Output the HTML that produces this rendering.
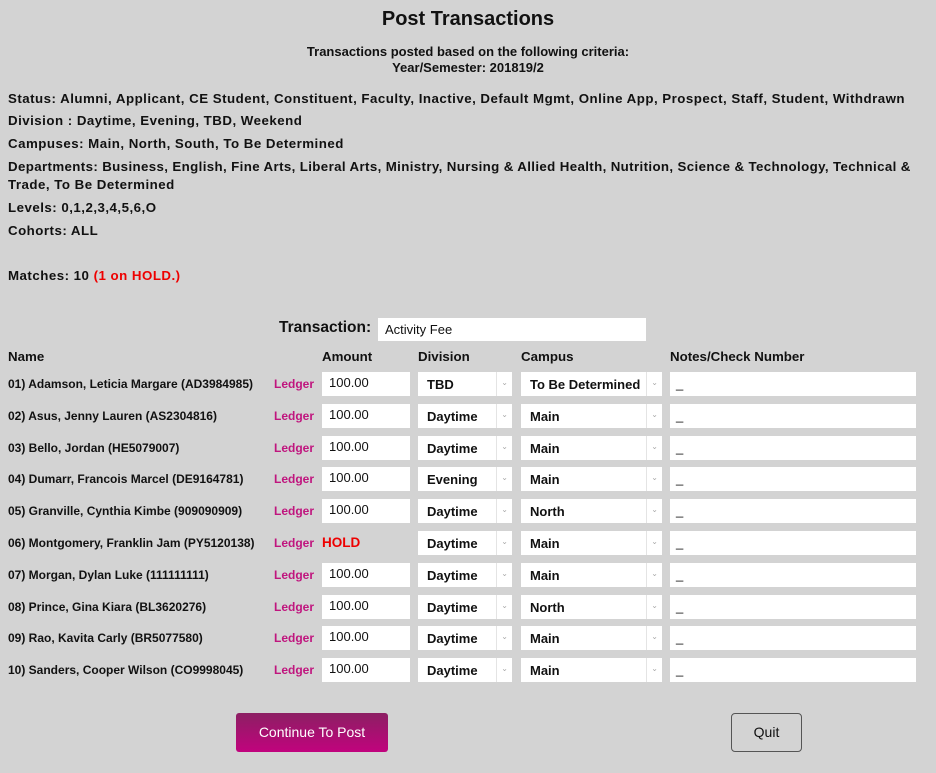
<!DOCTYPE html>
<html><head><meta charset="utf-8"><style>
body{margin:0;width:936px;height:773px;background:#d3d3d3;font-family:"Liberation Sans",sans-serif;color:#111;position:relative;overflow:hidden}
.a{position:absolute;white-space:nowrap}
.b{font-weight:bold}
h1{position:absolute;top:8px;left:0;width:936px;text-align:center;font-size:20px;margin:0;font-weight:bold}
.c{left:0;width:936px;text-align:center;font-size:13px;font-weight:bold}
.l{left:8px;font-size:13.3px;font-weight:bold;letter-spacing:0.48px}
.box{position:absolute;background:#fff;height:24px}
.sel{position:absolute;background:#fff;height:24px;font-size:13px;font-weight:bold;line-height:26px;padding-left:9px;box-sizing:border-box}
.sel:after{content:"";position:absolute;right:0;top:0;width:15px;height:24px;border-left:1px solid #e4e4e4;}
.arr{position:absolute;right:4px;top:4px;font-size:8px;color:#aaa;font-weight:normal;line-height:14px}
.nm{font-size:12px;font-weight:bold;left:8px}
.lg{font-size:12px;font-weight:bold;color:#c0157e;left:274px}
.amt{font-size:13px;padding-left:7px;line-height:22px;box-sizing:border-box}
</style></head><body>
<h1>Post Transactions</h1>
<div class="a c" style="top:44px">Transactions posted based on the following criteria:</div>
<div class="a c" style="top:60px">Year/Semester: 201819/2</div>
<div class="a l" style="top:91px">Status: Alumni, Applicant, CE Student, Constituent, Faculty, Inactive, Default Mgmt, Online App, Prospect, Staff, Student, Withdrawn</div>
<div class="a l" style="top:113px">Division : Daytime, Evening, TBD, Weekend</div>
<div class="a l" style="top:136px">Campuses: Main, North, South, To Be Determined</div>
<div class="a l" style="top:159px;letter-spacing:0.37px">Departments: Business, English, Fine Arts, Liberal Arts, Ministry, Nursing &amp; Allied Health, Nutrition, Science &amp; Technology, Technical &amp;</div>
<div class="a l" style="top:177px">Trade, To Be Determined</div>
<div class="a l" style="top:200px">Levels: 0,1,2,3,4,5,6,O</div>
<div class="a l" style="top:223px">Cohorts: ALL</div>
<div class="a l" style="top:268px">Matches: 10 <span style="color:#e00">(1 on HOLD.)</span></div>
<div class="a b" style="left:279px;top:319px;font-size:15.5px">Transaction:</div>
<div class="box" style="left:378px;top:318px;width:268px;height:23px;font-size:13px;line-height:23px;padding-left:7px;box-sizing:border-box">Activity Fee</div>
<div class="a b" style="left:8px;top:349px;font-size:13.3px">Name</div>
<div class="a b" style="left:322px;top:349px;font-size:13.3px">Amount</div>
<div class="a b" style="left:418px;top:349px;font-size:13.3px">Division</div>
<div class="a b" style="left:521px;top:349px;font-size:13.3px">Campus</div>
<div class="a b" style="left:670px;top:349px;font-size:13.3px">Notes/Check Number</div>
<div id="rows"></div>
<div class="a" style="left:236px;top:713px;width:152px;height:39px;border-radius:3px;background:linear-gradient(#8c1f63,#c1037d);color:#fff;font-size:14px;text-align:center;line-height:38px">Continue To Post</div>
<div class="a" style="left:731px;top:713px;width:69px;height:37px;border:1px solid #555;border-radius:4px;font-size:14px;text-align:center;line-height:37px">Quit</div>
<script>
var d=[["01) Adamson, Leticia Margare (AD3984985)","TBD","To Be Determined"],["02) Asus, Jenny Lauren (AS2304816)","Daytime","Main"],["03) Bello, Jordan (HE5079007)","Daytime","Main"],["04) Dumarr, Francois Marcel (DE9164781)","Evening","Main"],["05) Granville, Cynthia Kimbe (909090909)","Daytime","North"],["06) Montgomery, Franklin Jam (PY5120138)","Daytime","Main"],["07) Morgan, Dylan Luke (111111111)","Daytime","Main"],["08) Prince, Gina Kiara (BL3620276)","Daytime","North"],["09) Rao, Kavita Carly (BR5077580)","Daytime","Main"],["10) Sanders, Cooper Wilson (CO9998045)","Daytime","Main"]];
var h="";
d.forEach(function(r,i){var y=372+i*31.8;
h+='<div class="a nm" style="top:'+(y+5)+'px">'+r[0]+'</div>';
h+='<div class="a lg" style="top:'+(y+5)+'px">Ledger</div>';
if(i==5)h+='<div class="a b" style="left:322px;top:'+(y+4)+'px;color:#e00;font-size:13.5px">HOLD</div>';
else h+='<div class="box amt" style="left:322px;top:'+y+'px;width:88px">100.00</div>';
h+='<div class="sel" style="left:418px;top:'+y+'px;width:94px">'+r[1]+'<span class="arr">&#8964;</span></div>';
h+='<div class="sel" style="left:521px;top:'+y+'px;width:141px">'+r[2]+'<span class="arr">&#8964;</span></div>';
h+='<div class="box" style="left:670px;top:'+y+'px;width:246px;font-size:13px;line-height:24px;padding-left:6px;box-sizing:border-box">_</div>';});
document.getElementById("rows").innerHTML=h;
</script>
</body></html>
